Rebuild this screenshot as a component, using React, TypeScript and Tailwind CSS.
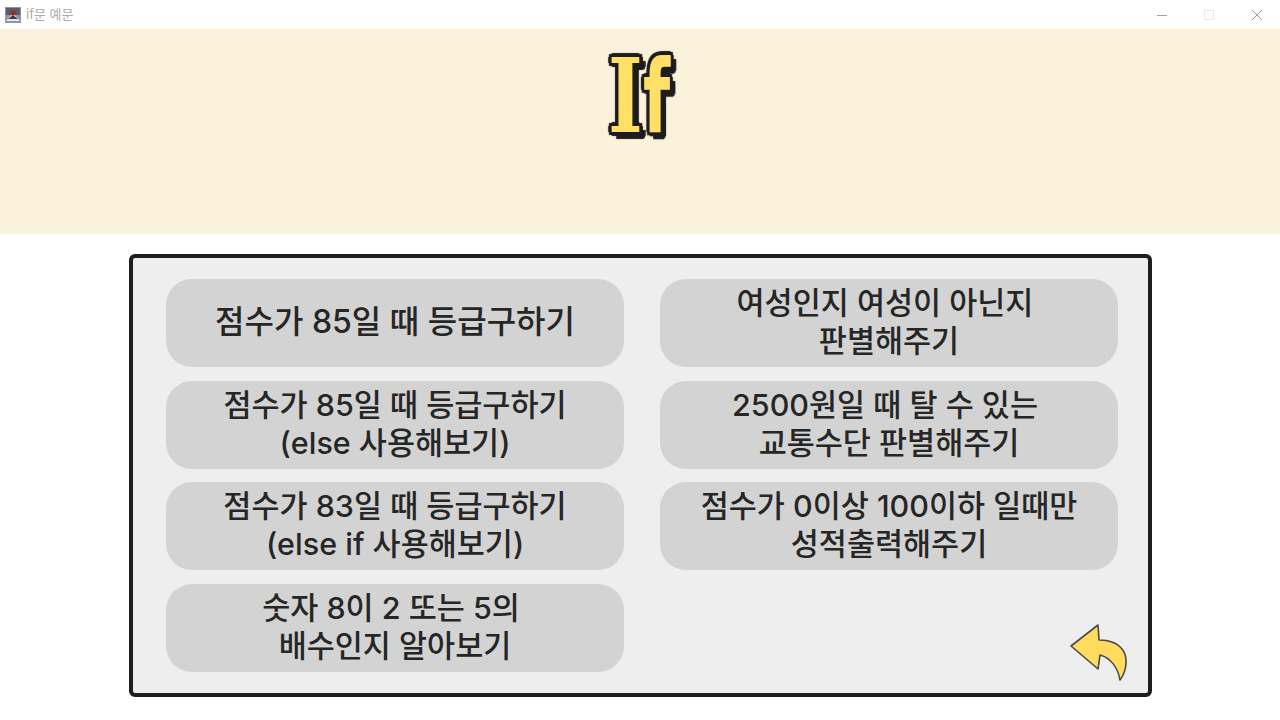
import React from 'react';

const FirstLine = ({ children }: { children: React.ReactNode }) => <span className="pr-[8px]">{children}</span>;

const quizItems: { label: React.ReactNode; big?: boolean }[] = [
  { label: <>점수가 85일 때 등급구하기</>, big: true },
  { label: <><FirstLine>여성인지 여성이 아닌지</FirstLine><br />판별해주기</> },
  { label: <>점수가 85일 때 등급구하기<br />(else 사용해보기)</> },
  { label: <><FirstLine>2500원일 때 탈 수 있는</FirstLine><br />교통수단 판별해주기</> },
  { label: <>점수가 83일 때 등급구하기<br />(else if 사용해보기)</> },
  { label: <>점수가 0이상 100이하 일때만<br />성적출력해주기</> },
  { label: <><FirstLine>숫자 8이 2 또는 5의</FirstLine><br />배수인지 알아보기</> },
];

const TitleBar = () => (
  <div className="flex h-[29px] items-center bg-white pl-[5px]">
    <svg width="16" height="16" viewBox="0 0 16 16">
      <rect width="16" height="16" fill="#8d95a3" />
      <rect x="1" y="1" width="14" height="7" fill="#5a5c66" />
      <path d="M1 14 L8 6 L15 14 Z" fill="#e6e6ea" />
      <path d="M3 12 L8 8 L13 12 Z" fill="#3b3d46" />
      <circle cx="8" cy="6" r="2.5" fill="#a8242c" />
    </svg>
    <span className="ml-[5px] text-[13px] leading-none text-[#ababab]">if문 예문</span>
    <div className="ml-auto flex items-center">
      <svg width="12" height="12" viewBox="0 0 12 12" className="mr-[35px]">
        <path d="M1 6.5 H11" stroke="#a0a0a0" strokeWidth="1" />
      </svg>
      <svg width="12" height="12" viewBox="0 0 12 12" className="mr-[36px]">
        <rect x="1.5" y="1.5" width="9" height="9" fill="none" stroke="#e8e8e8" strokeWidth="1" />
      </svg>
      <svg width="12" height="12" viewBox="0 0 12 12" className="mr-[17px]">
        <path d="M1 1 L11 11 M11 1 L1 11" stroke="#a0a0a0" strokeWidth="1" />
      </svg>
    </div>
  </div>
);

const BackArrow = () => (
  <svg width="60" height="60" viewBox="0 0 60 60">
    <path
      d="M29 3 L2 24 L29 47 L31 33 C42 36 49 46 51 58 C57 50 59 38 55 30 C50 21 41 18 30 18 Z"
      fill="#ffdc5e"
      stroke="#4a4a4a"
      strokeWidth="1.6"
      strokeLinejoin="round"
    />
  </svg>
);

export default function App() {
  return (
    <div className="h-[720px] w-[1280px] overflow-hidden bg-white font-['Inter','Noto_Sans_CJK_KR',sans-serif]">
      <TitleBar />

      <div className="flex h-[205px] justify-center bg-[#fbf2dc] pt-[10px]">
        <span className="h-fit origin-center scale-x-[0.72] pl-[4px] text-[102px] leading-[112px] font-bold text-[#ffe066] [-webkit-text-stroke:2px_#ffe066] [paint-order:stroke_fill] [text-shadow:5px_0_1px_#1f1d1e,-5px_0_1px_#1f1d1e,0_4px_1px_#1f1d1e,0_-4px_1px_#1f1d1e,4px_3px_1px_#1f1d1e,-4px_3px_1px_#1f1d1e,4px_-3px_1px_#1f1d1e,-4px_-3px_1px_#1f1d1e,8px_6px_1px_#1f1d1e,6px_7px_1px_#1f1d1e,9px_4px_1px_#1f1d1e]">
          <span className="font-['DejaVu_Serif',serif]">I</span>
          <span className="inline-block origin-left scale-x-[0.85] font-['DejaVu_Sans',sans-serif]">f</span>
        </span>
      </div>

      <div className="relative mt-[20px] ml-[129px] h-[443px] w-[1023px] rounded-[6px] border-4 border-[#1f1d1e] bg-[#eeeeee] pt-[21px] pl-[33px]">
        <div className="grid w-[952px] grid-cols-[458px_458px] gap-x-[36px] gap-y-[13.67px]">
          {quizItems.map((item, i) => (
            <div
              key={i}
              className={`flex h-[88px] items-center justify-center rounded-[26px] bg-[#d3d3d3] pb-[2px] text-center leading-[38px] font-medium text-[#262626] ${
                item.big ? 'text-[32px]' : 'text-[30.5px]'
              }`}
            >
              <span>{item.label}</span>
            </div>
          ))}
        </div>
        <div className="absolute right-[19px] bottom-[11px]">
          <BackArrow />
        </div>
      </div>
    </div>
  );
}
